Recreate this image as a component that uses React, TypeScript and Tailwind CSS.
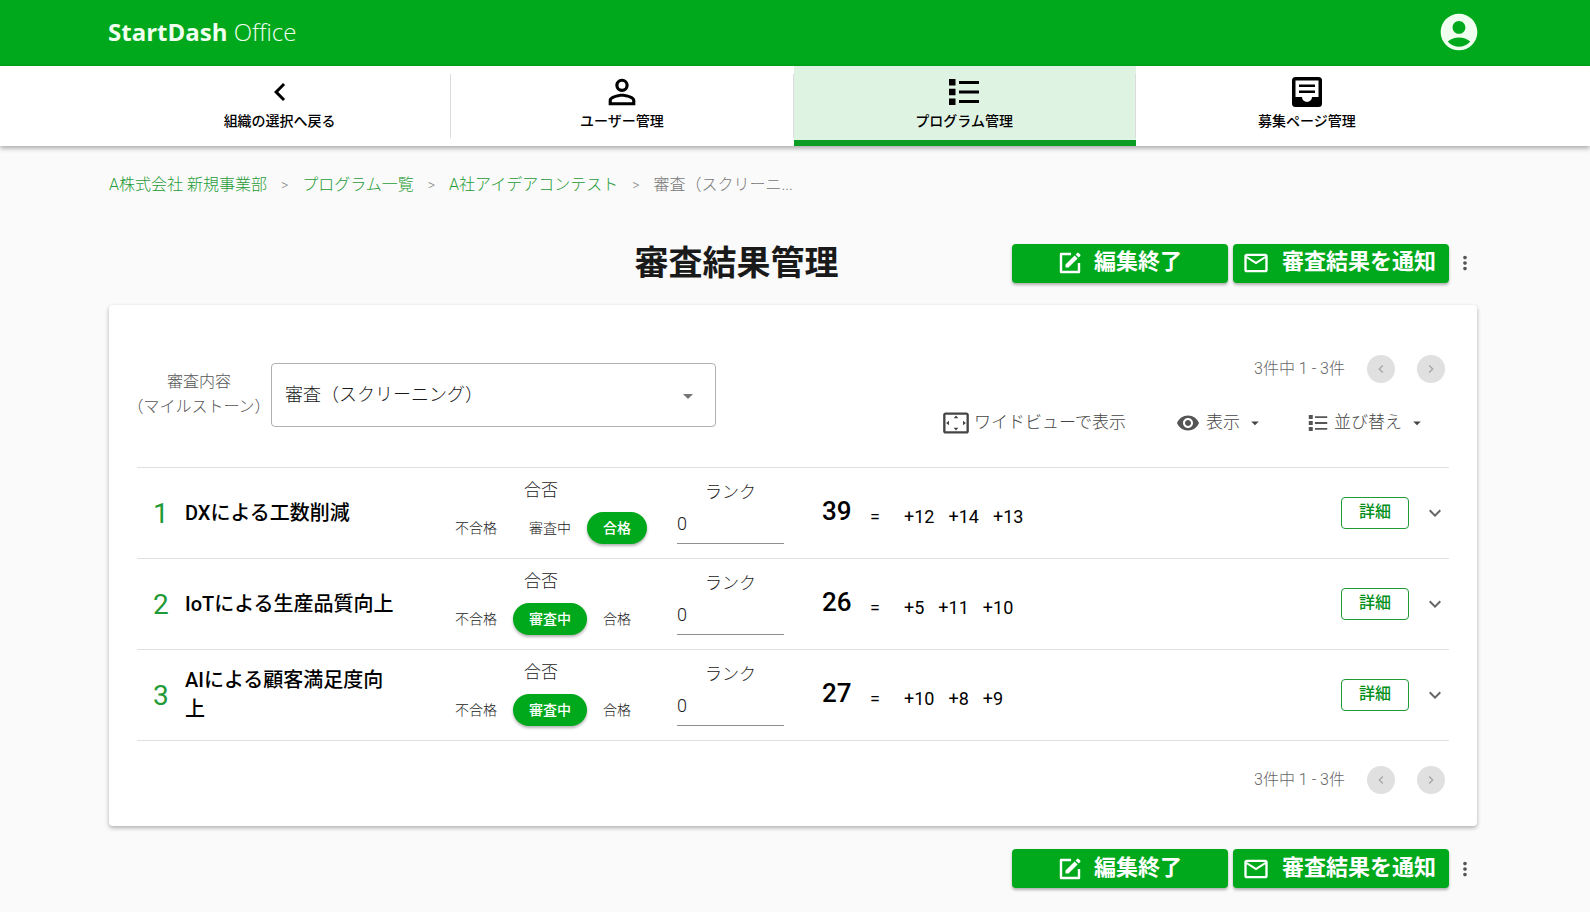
import type { ReactNode } from "react";
import {
	MdAccountCircle,
	MdArrowDropDown,
	MdChevronLeft,
	MdChevronRight,
	MdExpandMore,
	MdMoreVert,
	MdOutlineEmail,
	MdPersonOutline,
	MdSettingsOverscan,
	MdVisibility,
} from "react-icons/md";

interface IconProps {
	className?: string;
}

const ListIcon = ({ className }: IconProps) => (
	<svg viewBox="0 0 30 26" fill="currentColor" className={className}>
		<path d="M0 0h6.5v6.5H0zM0 9.75h6.5v6.5H0zM0 19.5h6.5V26H0zM10 2h20v3H10zM10 11.5h20v3H10zM10 21h20v3H10z" />
	</svg>
);

const InboxIcon = ({ className }: IconProps) => (
	<svg viewBox="0 0 30 30" className={className}>
		<rect width="30" height="30" rx="3.5" fill="currentColor" />
		<path
			d="M3.5 3.5h23V20H20a5 5 0 0 1-10 0H3.5z"
			fill="#fff"
		/>
		<path d="M7 7.5h16v2.5H7zM7 13.5h16V16H7z" fill="currentColor" />
	</svg>
);

const EditIcon = ({ className }: IconProps) => (
	<svg viewBox="0 0 24 24" className={className}>
		<path
			d="M13 3H3v18h18V12"
			fill="none"
			stroke="currentColor"
			strokeWidth="2.4"
			strokeLinejoin="round"
		/>
		<path
			d="M7.5 13.6 16.6 4.5l3 3-9.1 9.1h-3zM17.6 3.5l1.6-1.6a1 1 0 0 1 1.4 0l1.6 1.6a1 1 0 0 1 0 1.4l-1.6 1.6z"
			fill="currentColor"
		/>
	</svg>
);

interface NavItem {
	label: string;
	icon: ReactNode;
	active?: boolean;
}

const navItems: NavItem[] = [
	{
		label: "組織の選択へ戻る",
		icon: <MdChevronLeft className="size-9" />,
	},
	{
		label: "ユーザー管理",
		icon: <MdPersonOutline className="size-10" />,
	},
	{
		label: "プログラム管理",
		icon: <ListIcon className="h-[26px] w-[30px]" />,
		active: true,
	},
	{
		label: "募集ページ管理",
		icon: <InboxIcon className="size-[30px]" />,
	},
];

const crumbs = ["A株式会社 新規事業部", "プログラム一覧", "A社アイデアコンテスト"];

const statuses = ["不合格", "審査中", "合格"];

interface Entry {
	title: string;
	status: string;
	total: number;
	points: number[];
}

const entries: Entry[] = [
	{ title: "DXによる工数削減", status: "合格", total: 39, points: [12, 14, 13] },
	{ title: "IoTによる生産品質向上", status: "審査中", total: 26, points: [5, 11, 10] },
	{ title: "AIによる顧客満足度向上", status: "審査中", total: 27, points: [10, 8, 9] },
];

const Pager = () => (
	<div className="flex items-center text-[#666]">
		<span className="mr-[22px] text-base leading-7 font-light">3件中 1 - 3件</span>
		<button
			type="button"
			aria-label="前へ"
			className="mr-[22px] flex size-7 items-center justify-center rounded-full bg-[#e0e0e0] text-[#a6a6a6]"
		>
			<MdChevronLeft className="size-4" />
		</button>
		<button
			type="button"
			aria-label="次へ"
			className="flex size-7 items-center justify-center rounded-full bg-[#e0e0e0] text-[#a6a6a6]"
		>
			<MdChevronRight className="size-4" />
		</button>
	</div>
);

const Actions = () => (
	<div className="flex items-center gap-[5px] font-bold text-white">
		<button
			type="button"
			className="flex h-[39px] w-54 items-center justify-center gap-3 rounded bg-[#00a91c] shadow-[0_2px_3px_rgba(0,0,0,.3)]"
		>
			<EditIcon className="size-6" />
			<span className="pb-0.5 text-[22px] leading-8">編集終了</span>
		</button>
		<button
			type="button"
			className="flex h-[39px] w-54 items-center justify-center gap-3 rounded bg-[#00a91c] pr-1 shadow-[0_2px_3px_rgba(0,0,0,.3)]"
		>
			<MdOutlineEmail className="size-7" />
			<span className="pb-0.5 text-[22px] leading-8">審査結果を通知</span>
		</button>
		<button type="button" aria-label="その他" className="text-[#555]">
			<MdMoreVert className="size-[22px]" />
		</button>
	</div>
);

const EntryRow = ({ entry, index }: { entry: Entry; index: number }) => (
	<li className="flex h-[91px] items-center border-b border-[#e0e0e0]">
		<span className="w-12 pt-0.5 pl-4 text-[28px] text-[#1f9a36]">{index + 1}</span>
		<h2 className="w-[212px] text-xl leading-[29px] font-medium text-black">
			{entry.title}
		</h2>
		<fieldset className="ml-[42px] h-full w-[208px]">
			<legend className="float-left w-full pt-2 pb-2 pr-1 text-center text-[17px] leading-7 font-light">
				合否
			</legend>
			<div className="flex h-8 w-full items-center">
				{statuses.map((status) => (
					<label
						key={status}
						className="flex h-8 cursor-pointer items-center rounded-full px-4 text-sm font-light whitespace-nowrap has-checked:bg-[#00a91c] has-checked:font-medium has-checked:text-white has-checked:shadow-[0_2px_3px_rgba(0,0,0,.3)]"
					>
						<input
							type="radio"
							name={`status-${index}`}
							defaultChecked={status === entry.status}
							className="sr-only"
						/>
						{status}
					</label>
				))}
			</div>
		</fieldset>
		<div className="ml-[30px] flex h-full w-[107px] flex-col pt-2.5">
			<label
				htmlFor={`rank-${index}`}
				className="text-center text-[17px] leading-7 font-light"
			>
				ランク
			</label>
			<input
				id={`rank-${index}`}
				defaultValue="0"
				className="h-[38px] w-full border-b border-[#8f8f8f] pb-0.5 text-lg font-light outline-none"
			/>
		</div>
		<div className="ml-[38px] flex items-center text-lg text-black">
			<span className="w-12 pb-1 text-[26px] leading-8 font-medium">{entry.total}</span>
			<span className="w-[34px] pt-2">=</span>
			<span className="flex gap-3.5 pt-2">
				{entry.points.map((point, idx) => (
					<span key={idx}>+{point}</span>
				))}
			</span>
		</div>
		<button
			type="button"
			className="ml-auto h-8 w-[68px] rounded border border-[#1f9a36] pb-0.5 text-base font-medium text-[#00901a]"
		>
			詳細
		</button>
		<button type="button" aria-label="開く" className="mr-0.5 ml-3.5 text-[#666]">
			<MdExpandMore className="size-6" />
		</button>
	</li>
);

export default function App() {
	return (
		<div className="min-h-screen bg-[#fafafa] font-[Roboto,'Noto_Sans_CJK_JP',sans-serif] text-[#1a1a1a]">
			<header className="flex h-[66px] items-center justify-between bg-[#00a91c] pr-[109px] pb-0.5 pl-[108px] text-[#f0fff0]">
				<a href="#" className="font-['Open_Sans',sans-serif] text-2xl">
					<span className="font-bold">StartDash</span>{" "}
					<span className="font-light">Office</span>
				</a>
				<button type="button" aria-label="アカウント">
					<MdAccountCircle className="size-11" />
				</button>
			</header>

			<nav className="relative grid h-20 grid-cols-4 bg-white pr-28 pl-[109px] text-black shadow-[0_2px_5px_rgba(0,0,0,.35)]">
				{navItems.map((item) => (
					<a
						key={item.label}
						href="#"
						className={
							item.active
								? "group border-b-6 border-[#0b9d24] bg-[#dff3e3]"
								: "group"
						}
					>
						<span className="mt-2 flex h-16 flex-col items-center border-r border-[#dcdcdc] group-last:border-0">
							<span className="flex h-9 items-center">{item.icon}</span>
							<span className="mt-[3px] text-sm leading-4 font-medium">{item.label}</span>
						</span>
					</a>
				))}
			</nav>

			<main className="pr-[113px] pl-[109px]">
				<nav className="flex items-center gap-3.5 pt-[27px] text-base leading-6 font-light">
					{crumbs.map((crumb) => (
						<span key={crumb} className="flex items-center gap-3.5">
							<a href="#" className="text-[#1f9a36]">
								{crumb}
							</a>
							<span className="text-sm text-[#888]">&gt;</span>
						</span>
					))}
					<span className="text-[#777]">審査（スクリーニ...</span>
				</nav>

				<div className="mt-[41px] grid grid-cols-[1fr_auto_1fr] items-center pr-px">
					<h1 className="col-start-2 mr-28 text-[34px] leading-[50px] font-bold">
						審査結果管理
					</h1>
					<div className="flex justify-end">
						<Actions />
					</div>
				</div>

				<section className="mt-[17px] rounded bg-white px-7 pb-8 shadow-[0_2px_4px_rgba(0,0,0,.3)]">
					<div className="flex justify-between border-b border-[#e0e0e0] pt-12 pb-[30px]">
						<div className="-ml-2.5 flex h-21 items-center">
							<label
								htmlFor="milestone"
								className="w-36 pb-0.5 text-center text-base leading-[25px] font-light whitespace-nowrap text-[#555]"
							>
								審査内容
								<br />
								（マイルストーン）
							</label>
							<div className="relative">
								<select
									id="milestone"
									className="h-16 w-[445px] appearance-none rounded border border-[#b0b0b0] bg-white pl-[13px] text-lg font-light"
								>
									<option>審査（スクリーニング）</option>
								</select>
								<MdArrowDropDown className="pointer-events-none absolute top-[21px] right-4 size-6 text-[#757575]" />
							</div>
						</div>
						<div className="flex flex-col items-end pt-0.5">
							<div className="pr-1">
								<Pager />
							</div>
							<div className="mt-[26px] flex items-center gap-11 pr-[23px] text-[17px] font-light text-[#444]">
								<button type="button" className="mr-1.5 flex items-center gap-1">
									<MdSettingsOverscan className="size-7 text-[#444]" />
									ワイドビューで表示
								</button>
								<button type="button" className="flex items-center gap-1.5">
									<MdVisibility className="size-6 text-[#555]" />
									表示
									<MdArrowDropDown className="size-[18px]" />
								</button>
								<button type="button" className="flex items-center gap-1.5">
									<ListIcon className="h-4 w-5 text-[#555]" />
									並び替え
									<MdArrowDropDown className="size-[18px]" />
								</button>
							</div>
						</div>
					</div>
					<ul>
						{entries.map((entry, index) => (
							<EntryRow key={entry.title} entry={entry} index={index} />
						))}
					</ul>
					<div className="flex justify-end pt-[25px] pr-1">
						<Pager />
					</div>
				</section>

				<div className="flex justify-end pt-[23px] pr-px pb-6">
					<Actions />
				</div>
			</main>
		</div>
	);
}
